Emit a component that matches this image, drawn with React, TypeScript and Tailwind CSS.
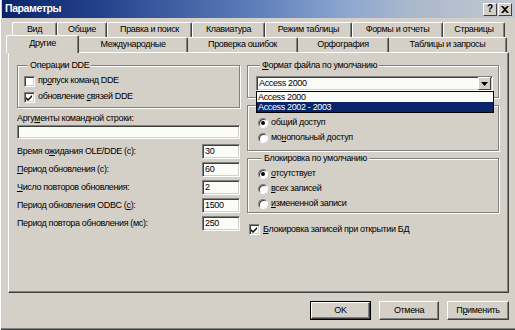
// Диалог «Параметры» (Access 2002, Windows 2000) — вкладка «Другие»

import type { ReactNode } from 'react';

const BACK_TABS = [
  { label: 'Вид', w: 'w-[45px]' },
  { label: 'Общие', w: 'w-[50px]' },
  { label: 'Правка и поиск', w: 'w-[85px]' },
  { label: 'Клавиатура', w: 'w-[73px]' },
  { label: 'Режим таблицы', w: 'w-[87px]' },
  { label: 'Формы и отчеты', w: 'w-[91px]' },
  { label: 'Страницы', w: 'w-[62px]' },
];

const FRONT_TABS = [
  { label: 'Международные', w: 'w-[109px]' },
  { label: 'Проверка ошибок', w: 'w-[110px]' },
  { label: 'Орфография', w: 'w-[91px]' },
  { label: 'Таблицы и запросы', w: 'w-[118px]' },
];

const FIELDS: { label: ReactNode; value: string }[] = [
  { label: <>Время о<u>ж</u>идания OLE/DDE (с):</>, value: '30' },
  { label: <><u>П</u>ериод обновления (с):</>, value: '60' },
  { label: <><u>Ч</u>исло повторов обновления:</>, value: '2' },
  { label: <>Период обновления ODBC (<u>с</u>):</>, value: '1500' },
  { label: <>Период повтора обновления (мс):</>, value: '250' },
];

function Checkbox({ checked }: { checked?: boolean }) {
  return (
    <span className="flex h-[11px] w-[11px] shrink-0 items-center justify-center border border-t-[#808080] border-l-[#808080] border-b-white border-r-white bg-white shadow-[inset_1px_1px_0_#404040,inset_-1px_-1px_0_#d4d0c8]">
      {checked && (
        <svg width="7" height="7" viewBox="0 0 7 7">
          <path d="M0 3 L2 5 L6 1 L6 3 L2 7 L0 5 Z" fill="#000" />
        </svg>
      )}
    </span>
  );
}

function Radio({ checked }: { checked?: boolean }) {
  return (
    <span className="flex h-[10px] w-[10px] shrink-0 items-center justify-center rounded-full border border-t-[#808080] border-l-[#808080] border-b-white border-r-white bg-white shadow-[inset_1px_1px_0_#404040]">
      {checked && <span className="h-[4px] w-[4px] rounded-full bg-black" />}
    </span>
  );
}

function Group({ title, children, className }: { title?: ReactNode; children: ReactNode; className?: string }) {
  return (
    <fieldset
      className={`border border-[#808080] shadow-[1px_1px_0_#fff,inset_1px_1px_0_#fff] ${className ?? ''}`}
    >
      <legend className={`ml-[4px] bg-[#d4d0c8] leading-[10px] ${title ? 'px-[2px]' : 'h-[10px] px-0'}`}>
        {title}
      </legend>
      {children}
    </fieldset>
  );
}

function Button({ children, isDefault }: { children: ReactNode; isDefault?: boolean }) {
  return (
    <div
      className={`flex h-[19px] items-center justify-center ${
        isDefault ? 'w-[61px] border border-black' : 'w-[60px]'
      }`}
    >
      <div className="flex h-full w-full items-center justify-center border border-t-white border-l-white border-b-[#404040] border-r-[#404040] shadow-[inset_-1px_-1px_0_#808080]">
        {children}
      </div>
    </div>
  );
}

export default function App() {
  return (
    <div className="h-[330px] w-[515px] overflow-hidden bg-[#d4d0c8] font-['Liberation_Sans',Arial,sans-serif] text-[9px] tracking-[-0.35px] text-black shadow-[inset_1px_0_0_#fff,inset_0_-1px_0_#404040,inset_0_-2px_0_#808080]">
      {/* Заголовок окна */}
      <div className="ml-[2px] flex h-[18px] items-center bg-[linear-gradient(90deg,#0a246a_0%,#22408a_18%,#5f80bc_50%,#8fa8d0_68%,#aab8cc_80%,#c2c8d2_100%)] pl-[3px] pr-[3px]">
        <span className="text-[10.5px] font-bold tracking-[-0.4px] text-white">Параметры</span>
        <div className="ml-auto flex gap-[1px]">
          <div className="flex h-[13px] w-[14px] items-center justify-center border border-t-white border-l-white border-b-[#404040] border-r-[#404040] bg-[#d4d0c8] text-[10px] font-bold leading-none tracking-normal">
            ?
          </div>
          <div className="flex h-[13px] w-[14px] items-center justify-center border border-t-white border-l-white border-b-[#404040] border-r-[#404040] bg-[#d4d0c8]">
            <svg width="8" height="7" viewBox="0 0 8 7">
              <path d="M0 0h2l2 2 2-2h2L5 3.5 8 7H6L4 5 2 7H0l3-3.5Z" fill="#000" />
            </svg>
          </div>
        </div>
      </div>

      {/* Вкладки: задний ряд */}
      <div className="mt-[4px] flex h-[15px] pl-[12px]">
        {BACK_TABS.map((t) => (
          <div
            key={t.label}
            className={`${t.w} flex h-[15px] items-center justify-center rounded-t-[2px] border-t border-l border-r border-t-white border-l-white border-r-[#404040] shadow-[inset_-1px_0_0_#808080]`}
          >
            {t.label}
          </div>
        ))}
      </div>

      {/* Вкладки: передний ряд */}
      <div className="relative z-10 flex h-[15px] items-end pl-[6px]">
        <div className="-mb-px flex h-[18px] w-[73px] items-center justify-center rounded-t-[2px] border-t border-l border-r border-t-white border-l-white border-r-[#404040] bg-[#d4d0c8] pb-[1px] shadow-[inset_-1px_0_0_#808080]">
          Другие
        </div>
        {FRONT_TABS.map((t) => (
          <div
            key={t.label}
            className={`${t.w} flex h-[15px] items-center justify-center rounded-t-[2px] border-t border-r border-t-white border-r-[#404040] shadow-[inset_-1px_0_0_#808080]`}
          >
            {t.label}
          </div>
        ))}
      </div>

      {/* Панель вкладки */}
      <div className="ml-[8px] flex h-[241px] w-[501px] gap-[7px] border border-t-white border-l-white border-b-[#404040] border-r-[#404040] pl-[8px] pt-[7px] shadow-[inset_-1px_-1px_0_#808080]">
        {/* Левая колонка */}
        <div className="flex w-[223px] flex-col">
          <Group title="Операции DDE" className="px-[6px] pb-[2px] pt-[3px]">
            <label className="flex h-[16px] items-center gap-[3px]">
              <Checkbox />
              <span>пр<u>о</u>пуск команд DDE</span>
            </label>
            <label className="flex h-[16px] items-center gap-[3px]">
              <Checkbox checked />
              <span>обновление <u>с</u>вязей DDE</span>
            </label>
          </Group>

          <p className="mt-[5px] leading-[10px]">
            Аргу<u>м</u>енты командной строки:
          </p>
          <div className="mt-[2px] h-[14px] w-full border border-t-[#808080] border-l-[#808080] border-b-white border-r-white bg-[#fbfbf8] shadow-[inset_1px_1px_0_#404040,inset_-1px_-1px_0_#d4d0c8]" />

          <div className="mt-[5px] flex flex-col gap-[3px]">
            {FIELDS.map((f) => (
              <div key={f.value} className="flex h-[15px] items-center justify-between">
                <span>{f.label}</span>
                <div className="flex h-[15px] w-[38px] items-center border border-t-[#808080] border-l-[#808080] border-b-white border-r-white bg-[#fbfbf8] pl-[2px] shadow-[inset_1px_1px_0_#404040,inset_-1px_-1px_0_#d4d0c8]">
                  {f.value}
                </div>
              </div>
            ))}
          </div>
        </div>

        {/* Правая колонка */}
        <div className="flex w-[252px] flex-col">
          <Group title={<><u>Ф</u>ормат файла по умолчанию</>} className="pb-[6px] pl-[8px] pr-[5px] pt-[6px]">
            <div className="relative">
              <div className="flex h-[15px] w-[237px] items-center border border-t-[#808080] border-l-[#808080] border-b-white border-r-white bg-[#fbfbf8] pl-[2px] shadow-[inset_1px_1px_0_#404040,inset_-1px_-1px_0_#d4d0c8]">
                <span>Access 2000</span>
                <div className="ml-auto mr-px flex h-[13px] w-[13px] items-center justify-center border border-t-white border-l-white border-b-[#404040] border-r-[#404040] bg-[#d4d0c8]">
                  <svg width="7" height="4" viewBox="0 0 7 4">
                    <path d="M0 0h7L3.5 4Z" fill="#000" />
                  </svg>
                </div>
              </div>
              {/* Раскрытый список */}
              <div className="absolute left-0 top-full z-20 w-[238px] border border-black bg-[#fbfbf8]">
                <div className="h-[10px] pl-[1px] leading-[10px]">Access 2000</div>
                <div className="h-[10px] bg-[#0a246a] pl-[1px] leading-[10px] text-white">Access 2002 - 2003</div>
              </div>
            </div>
          </Group>

          {/* Режим открытия — подпись закрыта раскрытым списком */}
          <Group className="mt-[2px] pb-[5px] pl-[10px] pt-[5px]">
            <label className="flex h-[15px] items-center gap-[3px]">
              <Radio checked />
              <span>общий доступ</span>
            </label>
            <label className="flex h-[15px] items-center gap-[3px]">
              <Radio />
              <span>мо<u>н</u>опольный доступ</span>
            </label>
          </Group>

          <Group title="Блокировка по умолчанию" className="mt-[2px] pb-[1px] pl-[10px] pt-[3px]">
            <label className="flex h-[15px] items-center gap-[3px]">
              <Radio checked />
              <span><u>о</u>тсутствует</span>
            </label>
            <label className="flex h-[15px] items-center gap-[3px]">
              <Radio />
              <span><u>в</u>сех записей</span>
            </label>
            <label className="flex h-[15px] items-center gap-[3px]">
              <Radio />
              <span><u>и</u>змененной записи</span>
            </label>
          </Group>

          <label className="ml-[2px] mt-[9px] flex h-[15px] items-center gap-[3px]">
            <Checkbox checked />
            <span><u>Б</u>локировка записей при открытии БД</span>
          </label>
        </div>
      </div>

      {/* Кнопки */}
      <div className="mt-[8px] flex justify-end gap-[8px] pr-[6px]">
        <Button isDefault>OK</Button>
        <Button>Отмена</Button>
        <div className="flex h-[19px] w-[62px] items-center justify-center border border-t-white border-l-white border-b-[#404040] border-r-[#404040] shadow-[inset_-1px_-1px_0_#808080]">
          П<u>р</u>именить
        </div>
      </div>
    </div>
  );
}
